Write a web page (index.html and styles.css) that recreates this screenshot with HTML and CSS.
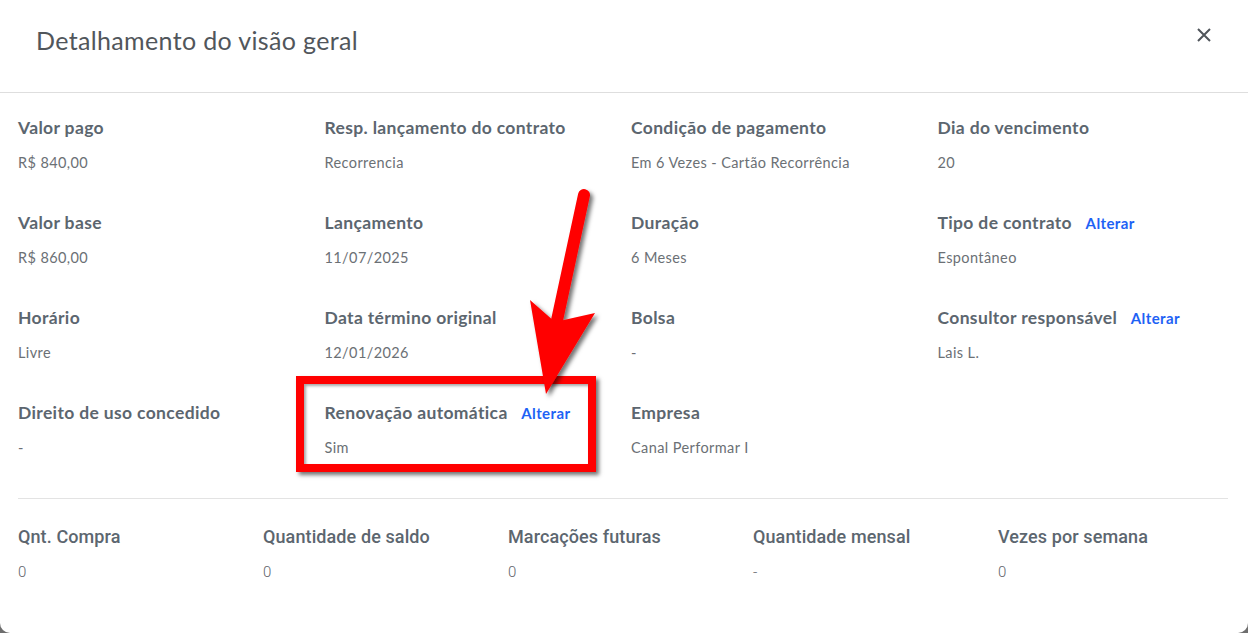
FILE: index.html
```html
<!DOCTYPE html>
<html lang="pt-BR">
<head>
<meta charset="utf-8">
<title>Detalhamento do visão geral</title>
<link rel="stylesheet" href="styles.css">
</head>
<body>
<div class="modal">
  <header class="modal-header">
    <h1 class="modal-title">Detalhamento do visão geral</h1>
    <button class="close-btn" aria-label="Fechar">
      <svg width="16" height="16" viewBox="0 0 16 16"><path d="M2 2 L14 14 M14 2 L2 14" stroke="#50555b" stroke-width="2" fill="none"/></svg>
    </button>
  </header>
  <section class="modal-body">
    <div class="grid4">
      <div class="item"><div class="label">Valor pago</div><div class="value">R$ 840,00</div></div>
      <div class="item"><div class="label">Resp. lançamento do contrato</div><div class="value">Recorrencia</div></div>
      <div class="item"><div class="label">Condição de pagamento</div><div class="value">Em 6 Vezes - Cartão Recorrência</div></div>
      <div class="item"><div class="label">Dia do vencimento</div><div class="value">20</div></div>

      <div class="item"><div class="label">Valor base</div><div class="value">R$ 860,00</div></div>
      <div class="item"><div class="label">Lançamento</div><div class="value">11/07/2025</div></div>
      <div class="item"><div class="label">Duração</div><div class="value">6 Meses</div></div>
      <div class="item"><div class="label">Tipo de contrato <a class="link">Alterar</a></div><div class="value">Espontâneo</div></div>

      <div class="item"><div class="label">Horário</div><div class="value">Livre</div></div>
      <div class="item"><div class="label">Data término original</div><div class="value">12/01/2026</div></div>
      <div class="item"><div class="label">Bolsa</div><div class="value">-</div></div>
      <div class="item"><div class="label">Consultor responsável <a class="link">Alterar</a></div><div class="value">Lais L.</div></div>

      <div class="item"><div class="label">Direito de uso concedido</div><div class="value">-</div></div>
      <div class="item"><div class="label">Renovação automática <a class="link">Alterar</a></div><div class="value">Sim</div></div>
      <div class="item"><div class="label">Empresa</div><div class="value">Canal Performar I</div></div>
      <div class="item"></div>
    </div>
    <hr class="divider">
    <div class="grid5">
      <div class="item"><div class="label2">Qnt. Compra</div><div class="value2">0</div></div>
      <div class="item"><div class="label2">Quantidade de saldo</div><div class="value2">0</div></div>
      <div class="item"><div class="label2">Marcações futuras</div><div class="value2">0</div></div>
      <div class="item"><div class="label2">Quantidade mensal</div><div class="value2">-</div></div>
      <div class="item"><div class="label2">Vezes por semana</div><div class="value2">0</div></div>
    </div>
  </section>
  <div class="highlight-box"></div>
  <svg class="arrow" width="1248" height="633" viewBox="0 0 1248 633">
    <defs>
      <filter id="sh" x="-20%" y="-20%" width="140%" height="140%">
        <feDropShadow dx="3" dy="3" stdDeviation="2" flood-color="#000" flood-opacity="0.55"/>
      </filter>
    </defs>
    <g filter="url(#sh)">
      <line x1="584" y1="195" x2="556" y2="325" stroke="#ff0000" stroke-width="12" stroke-linecap="round"/>
      <polygon points="530,300 555,322 595,313 546,394" fill="#ff0000"/>
    </g>
  </svg>
</div>
</body>
</html>
```
FILE: styles.css
```css
* { box-sizing: border-box; }
html, body { margin: 0; padding: 0; }
body {
  background: #6e6e6e;
  width: 1248px;
  height: 633px;
  overflow: hidden;
  font-family: Lato, "Noto Sans", sans-serif;
}
.modal {
  position: relative;
  width: 1248px;
  height: 633px;
  background: #fff;
  border-radius: 0 0 10px 10px;
}
.modal-header {
  height: 93px;
  border-bottom: 1px solid #dedede;
  display: flex;
  align-items: center;
  justify-content: space-between;
  padding: 0 36px 13px 36px;
}
.modal-title {
  margin: 0;
  font-family: Lato, sans-serif;
  font-weight: 400;
  font-size: 25px;
  letter-spacing: 0.35px;
  color: #51565b;
}
.close-btn {
  border: 0;
  background: none;
  padding: 0;
  margin-bottom: 10px;
  width: 16px;
  height: 16px;
  display: flex;
}
.modal-body {
  padding: 25px 0 0 18px;
}
.grid4 {
  display: grid;
  grid-template-columns: repeat(4, 306.5px);
  row-gap: 40px;
}
.grid5 {
  display: grid;
  grid-template-columns: repeat(5, 245px);
}
.label {
  font-family: Lato, sans-serif;
  font-weight: 700;
  font-size: 17.5px;
  letter-spacing: 0.35px;
  line-height: 20px;
  color: #5c666f;
  margin-bottom: 15px;
  white-space: nowrap;
}
.link {
  color: #1e62f5;
  font-size: 15px;
  letter-spacing: 0.4px;
  font-weight: 700;
  margin-left: 9px;
}
.value {
  font-family: Lato, sans-serif;
  font-size: 14.5px;
  letter-spacing: 0.4px;
  line-height: 20px;
  color: #6b7075;
}
.divider {
  border: 0;
  border-top: 1px solid #e3e3e3;
  margin: 40px 20px 28px 0;
}
.label2 {
  font-family: Roboto, sans-serif;
  font-weight: 500;
  font-size: 18px;
  letter-spacing: 0.1px;
  line-height: 20px;
  color: #5c666f;
  margin-bottom: 15px;
}
.value2 {
  font-family: Roboto, sans-serif;
  font-weight: 300;
  font-size: 15px;
  line-height: 20px;
  color: #5f656b;
}
.highlight-box {
  position: absolute;
  left: 296px;
  top: 376px;
  width: 300px;
  height: 96px;
  border: 8px solid #ff0000;
  box-shadow: 3px 3px 4px rgba(0,0,0,0.55), inset 2px 2px 3px rgba(0,0,0,0.35);
}
.arrow {
  position: absolute;
  left: 0;
  top: 0;
  pointer-events: none;
}
```
